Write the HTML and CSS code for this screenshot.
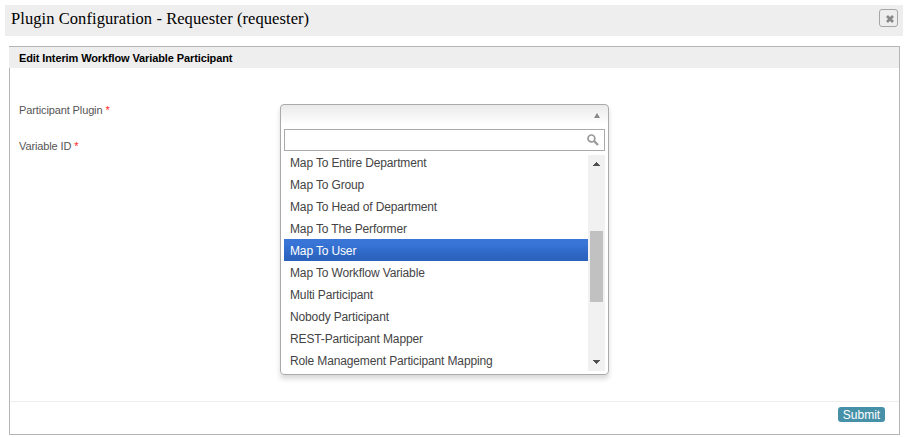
FILE: index.html
```html
<!DOCTYPE html>
<html lang="en">
<head>
<meta charset="utf-8">
<title>Plugin Configuration</title>
<link rel="stylesheet" href="styles.css">
</head>
<body>
<header class="header">
  <h1 class="header-title"><span>Plugin Configuration - Requester (requester)</span></h1>
  <button class="close" aria-label="Close"><svg width="8" height="8" viewBox="0 0 8 8"><path d="M1 1l6 6M7 1L1 7" stroke="#888" stroke-width="2.7"/></svg></button>
</header>
<main class="panel">
  <h2 class="panel-title"><span>Edit Interim Workflow Variable Participant</span></h2>
  <form class="form">
    <div class="row">
      <label class="label"><span>Participant Plugin</span> <b class="required">*</b></label>
      <div class="select">
        <div class="select-head"><svg width="6" height="5" viewBox="0 0 6 5"><path d="M3 0l3 5H0z" fill="#888"/></svg></div>
        <div class="search"><svg width="12" height="12" viewBox="0 0 12 12" fill="none" stroke="#999"><circle cx="4.4" cy="4.4" r="3.4" stroke-width="1.7"/><path d="M7 7l4 4" stroke-width="2.3"/></svg></div>
        <div class="list">
          <ul class="options">
            <li>Map To Entire Department</li>
            <li>Map To Group</li>
            <li>Map To Head of Department</li>
            <li>Map To The Performer</li>
            <li class="active">Map To User</li>
            <li>Map To Workflow Variable</li>
            <li>Multi Participant</li>
            <li>Nobody Participant</li>
            <li>REST-Participant Mapper</li>
            <li>Role Management Participant Mapping</li>
          </ul>
          <div class="scrollbar">
            <svg width="7" height="4" viewBox="0 0 7 4" shape-rendering="crispEdges"><path d="M3 0h1v1h1v1h1v1h1v1H0V3h1V2h1V1h1z" fill="#505050"/></svg>
            <i class="thumb"></i>
            <svg width="7" height="4" viewBox="0 0 7 4" shape-rendering="crispEdges"><path d="M0 0h7v1H6v1H5v1H4v1H3V3H2V2H1V1H0z" fill="#505050"/></svg>
          </div>
        </div>
      </div>
    </div>
    <div class="row">
      <label class="label"><span>Variable ID</span> <b class="required">*</b></label>
    </div>
  </form>
  <footer class="footer"><button class="submit">Submit</button></footer>
</main>
</body>
</html>
```
FILE: styles.css
```css
* { box-sizing: border-box; }
body {
  margin: 0;
  padding: 5px 6px 0 5px;
  height: 437px;
  overflow: hidden;
  background: #fff;
  font-family: "Liberation Sans", Arial, sans-serif;
}
.header {
  display: flex;
  align-items: flex-start;
  justify-content: space-between;
  height: 31px;
  padding: 4px 5px 0 6px;
  background: #eee;
}
.header-title {
  margin: 0;
  font: 400 16.5px/20px "Liberation Serif", serif;
  letter-spacing: 0.07px;
  color: #000;
}
.close {
  display: flex;
  align-items: center;
  justify-content: center;
  width: 19px;
  height: 18px;
  padding: 2px 0 0 2px;
  border: 1px solid #a5a5a5;
  border-radius: 3px;
  background: #eee;
}
.panel {
  display: flex;
  flex-direction: column;
  width: 891px;
  height: 389px;
  margin: 10px 0 0 4px;
  border: 1px solid #b5b5b5;
}
.panel-title {
  height: 21px;
  margin: 0 0 0 -1px;
  padding-left: 10px;
  background: #eee;
  font-size: 11px;
  line-height: 22px;
  letter-spacing: -0.11px;
  color: #000;
}
.form {
  flex: 1;
  padding: 32px 9px 0;
}
.row {
  position: relative;
  height: 36px;
}
.label {
  display: block;
  font-size: 11px;
  line-height: 21px;
  letter-spacing: -0.12px;
  color: #555;
}
.required {
  font-weight: 400;
  color: #f22;
}
.select {
  position: absolute;
  z-index: 1;
  top: 4px;
  left: 261px;
  width: 329px;
  height: 271px;
  padding: 0 3px;
  border: 1px solid #aaa;
  border-radius: 4px;
  background: linear-gradient(#eaeaea, #fff 20px);
  box-shadow: 0 4px 5px rgba(0, 0, 0, .15);
}
.select-head {
  display: flex;
  justify-content: flex-end;
  height: 24px;
  padding: 8px 5px 0 0;
}
.search {
  display: flex;
  justify-content: flex-end;
  height: 22px;
  padding: 4px 5px 0 0;
  border: 1px solid #aaa;
  background: #fff;
}
.list {
  display: flex;
  height: 216px;
  margin-top: 4px;
  overflow: hidden;
}
.options {
  flex: 1;
  margin: -4px 0 0;
  padding: 0;
  list-style: none;
  font-size: 12px;
  line-height: 24px;
  letter-spacing: -0.14px;
  color: #444;
}
.options li {
  height: 22px;
  padding-left: 6px;
  white-space: nowrap;
}
.options .active {
  color: #fff;
  background: linear-gradient(#3875d7 20%, #2a62bc 90%);
}
.scrollbar {
  display: flex;
  flex-direction: column;
  align-items: center;
  width: 17px;
  padding: 7px 0;
  background: #f1f1f1;
}
.thumb {
  width: 13px;
  height: 71px;
  margin: 65px 0 58px;
  background: #c1c1c1;
}
.footer {
  display: flex;
  justify-content: flex-end;
  height: 33px;
  padding: 5px 14px 0 0;
  border-top: 1px solid #eee;
}
.submit {
  width: 47px;
  height: 15px;
  padding: 0;
  border: 0;
  border-radius: 3px;
  background: #4690a8;
  color: #fff;
  font: 12px/16px "Liberation Sans", Arial, sans-serif;
}
```
